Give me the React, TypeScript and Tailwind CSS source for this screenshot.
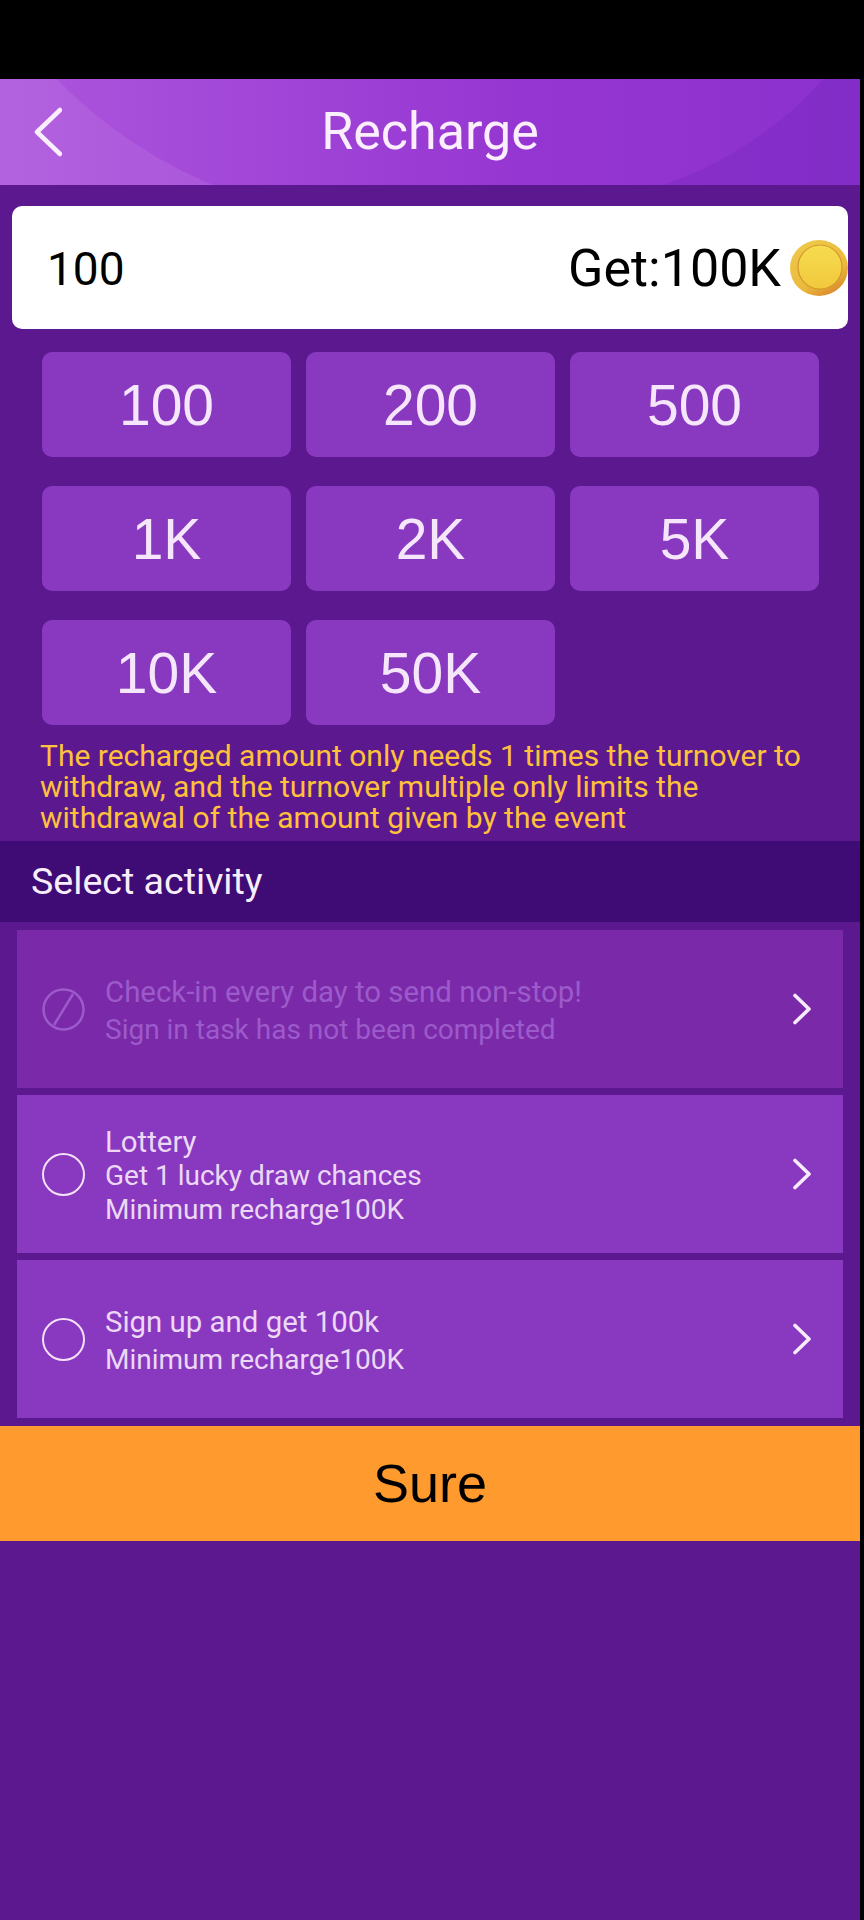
const amounts = ["100", "200", "500", "1K", "2K", "5K", "10K", "50K"];

function Coin() {
  return (
    <svg viewBox="0 0 58 56" className="w-[58px] h-[56px] shrink-0">
      <defs>
        <linearGradient id="rim" x1="0.2" y1="0" x2="0.8" y2="1">
          <stop offset="0" stopColor="#eec84a" />
          <stop offset="0.65" stopColor="#ebba3c" />
          <stop offset="1" stopColor="#d8822a" />
        </linearGradient>
        <linearGradient id="face" x1="0" y1="0" x2="0" y2="1">
          <stop offset="0" stopColor="#f6dc50" />
          <stop offset="1" stopColor="#f2c83c" />
        </linearGradient>
      </defs>
      <ellipse cx="29" cy="28" rx="29" ry="28" fill="url(#rim)" />
      <circle cx="30" cy="27" r="22" fill="url(#face)" stroke="#d39a2a" strokeWidth="1.2" />
    </svg>
  );
}

function Activity({
  title,
  lines,
  disabled,
  compact,
}: {
  title: string;
  lines: string[];
  disabled?: boolean;
  compact?: boolean;
}) {
  return (
    <div
      className={`h-[158px] flex items-center pl-[25px] pr-[31px] ${
        disabled ? "bg-[#7a2aa8]" : "bg-[#8839c0]"
      }`}
    >
      {disabled ? (
        <svg viewBox="0 0 43 43" className="w-[43px] h-[43px] shrink-0" fill="none" stroke="#9c5acb" strokeWidth="2.5">
          <circle cx="21.5" cy="21.5" r="20" />
          <path d="M12 37 31 6" />
        </svg>
      ) : (
        <div className="w-[43px] h-[43px] rounded-full border-[2.5px] border-[#f5e0f8] shrink-0" />
      )}
      <div
        className={`grow pl-[20px] pt-[4px] ${
          disabled ? "text-[#9c5acb]" : "text-[#ecd8f5]"
        } ${compact ? "leading-[33.5px]" : "leading-[38.5px]"}`}
      >
        <div className="text-[29.4px]">{title}</div>
        {lines.map((line) => (
          <div key={line} className="text-[28px]">
            {line}
          </div>
        ))}
      </div>
      <svg viewBox="0 0 20 32" className="w-[20px] h-[32px] shrink-0" fill="none" stroke="#f8ecfc" strokeWidth="3.6" strokeLinecap="round" strokeLinejoin="round">
        <path d="M3 2.5 17 16 3 29.5" />
      </svg>
    </div>
  );
}

export default function App() {
  return (
    <div className="bg-black min-h-[1920px] flex font-['Roboto',sans-serif]">
      <div className="w-[860px] bg-[#5c188f] mt-[79px] h-[1841px]">
        <header className="relative h-[106px] overflow-hidden bg-gradient-to-r from-[#ad55dd] via-[#9636d2] via-60% to-[#8b31cd] flex items-center justify-center">
          <svg viewBox="0 0 860 106" className="absolute inset-0 w-full h-full" preserveAspectRatio="none">
            <path d="M57 0C95 40 150 80 213 106H0V0Z" fill="#ffffff" fillOpacity="0.08" />
            <path d="M663 106C725 85 785 45 823 0H860V106Z" fill="#3a0a90" fillOpacity="0.1" />
          </svg>
          <svg viewBox="0 0 28 50" className="absolute left-[34px] top-[28px] w-[28px] h-[50px]" fill="none" stroke="#fbeefd" strokeWidth="4.5" strokeLinecap="round" strokeLinejoin="round">
            <path d="M26 3 3 25 26 47" />
          </svg>
          <h1 className="relative text-[52px] text-[#fbeefd]">Recharge</h1>
        </header>

        <div className="mt-[21px] mx-[12px] h-[123px] bg-white rounded-[10px] flex items-center justify-between pl-[35px] text-black">
          <span className="text-[46px] pt-[3px]">100</span>
          <div className="flex items-center gap-[9px]">
            <span className="text-[52px] pt-[2px]">Get:100K</span>
            <Coin />
          </div>
        </div>

        <div className="grid grid-cols-[249px_249px_249px] gap-x-[15px] gap-y-[29px] ml-[42px] mt-[23px]">
          {amounts.map((a) => (
            <div
              key={a}
              className="h-[105px] rounded-[10px] bg-[#8839c0] flex items-center justify-center pt-[2px] text-[57px] text-[#f6e6fb] font-['Liberation_Sans',sans-serif]"
            >
              {a}
            </div>
          ))}
        </div>

        <p className="ml-[40px] mr-[40px] mt-[15px] text-[30px] leading-[31px] text-[#ffc13b]">
          The recharged amount only needs 1 times the turnover to withdraw, and the turnover multiple only limits the withdrawal of the amount given by the event
        </p>

        <div className="mt-[8px] h-[81px] bg-[#3e0c74] flex items-center pl-[31px] text-[37.6px] text-[#f8eefb]">
          Select activity
        </div>

        <div className="mt-[8px] mx-[17px] flex flex-col gap-[7px]">
          <Activity disabled title="Check-in every day to send non-stop!" lines={["Sign in task has not been completed"]} />
          <Activity compact title="Lottery" lines={["Get 1 lucky draw chances", "Minimum recharge100K"]} />
          <Activity title="Sign up and get 100k" lines={["Minimum recharge100K"]} />
        </div>

        <button className="mt-[8px] w-full h-[115px] bg-[#ff9a2e] text-black text-[54px] font-['Liberation_Sans',sans-serif]">
          Sure
        </button>
      </div>
    </div>
  );
}
